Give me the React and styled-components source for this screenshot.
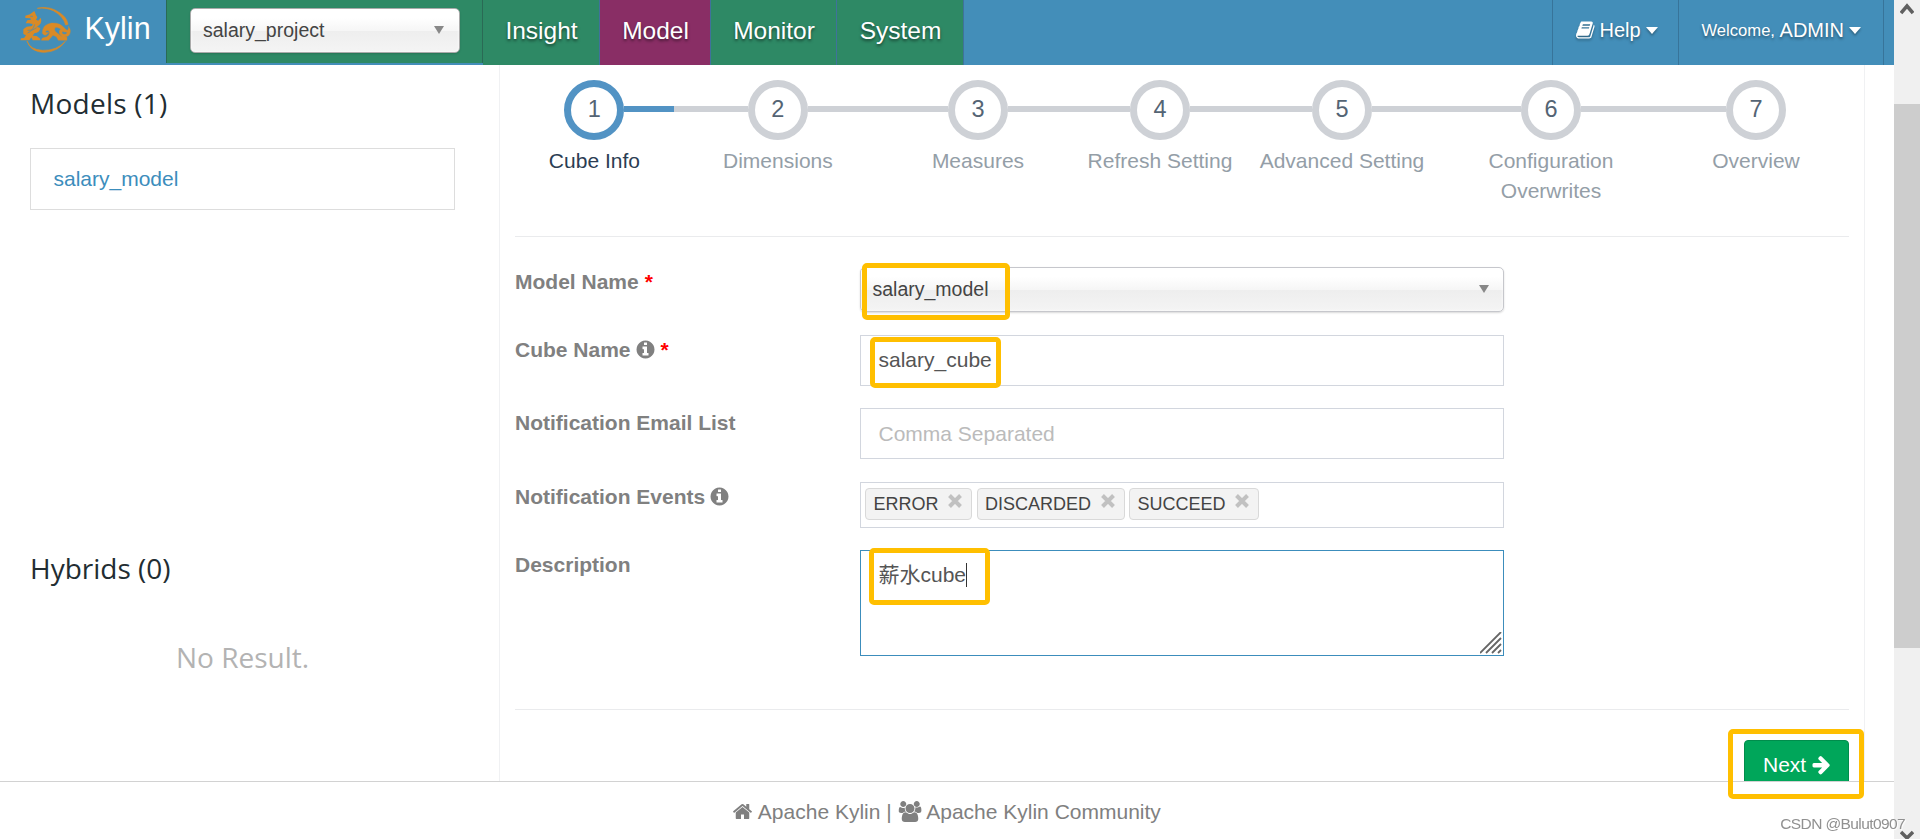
import React from 'react'
import styled, { createGlobalStyle } from 'styled-components'

const GlobalStyle = createGlobalStyle`
  * {
    box-sizing: border-box;
  }
  body {
    margin: 0;
    background: white;
    overflow: hidden;
    font-family: "Liberation Sans", Arial, "Noto Sans CJK SC", sans-serif;
    font-size: 21px;
    line-height: 30px;
    color: #333;
  }
`;

const icons = {
  book: {
    width: 1792,
    d: "M1639 478q40 57 18 129l-275 906q-19 64-76.500 107.500t-122.500 43.500h-923q-77 0-148.500-53.500t-99.500-131.500q-24-67-2-127 0-4 3-27t4-37q1-8-3-21.500t-3-19.500q2-11 8-21t16.500-23.500 16.500-23.500q23-38 45-91.500t30-91.500q3-10 .5-30t-.5-28q3-11 17-28t17-23q21-36 42-92t25-90q1-9-2.500-32t.5-28q4-13 22-30.500t22-22.500q19-26 42.500-84.500t27.500-96.500q1-8-3-25.500t-2-26.500q2-8 9-18t18-23 17-21q8-12 16.500-30.500t15-35 16-36 19.500-32 26.500-23.500 36-11.500 47.500 5.500l-1 3q38-9 51-9h761q74 0 114 56t18 130l-274 906q-36 119-71.500 153.500t-128.500 34.500h-869q-27 0-38 15-11 16-1 43 24 70 144 70h923q29 0 56-15.500t35-41.500l300-987q7-22 5-57 38 15 59 43zm-1064 2q-4 13 2 22.500t20 9.500h608q13 0 25.500-9.500t16.500-22.500l21-64q4-13-2-22.500t-20-9.500h-608q-13 0-25.500 9.500t-16.500 22.500zm-83 256q-4 13 2 22.500t20 9.500h608q13 0 25.500-9.500t16.500-22.500l21-64q4-13-2-22.500t-20-9.500h-608q-13 0-25.500 9.500t-16.500 22.500z"
  },
  home: {
    width: 1792,
    d: "M1472 992v480q0 26-19 45t-45 19h-384v-384h-256v384h-384q-26 0-45-19t-19-45v-480q0-1 .5-3t.5-3l575-474 575 474q1 2 1 6zm223-69l-62 74q-8 9-21 11h-3q-13 0-21-7l-692-577-692 577q-12 8-24 7-13-2-21-11l-62-74q-8-10-7-23.500t11-21.500l719-599q32-26 76-26t76 26l244 204v-195q0-14 9-23t23-9h192q14 0 23 9t9 23v408l219 182q10 8 11 21.500t-7 23.500z"
  },
  info: {
    width: 1792,
    d: "M1152 1376v-160q0-14-9-23t-23-9h-96v-512q0-14-9-23t-23-9h-320q-14 0-23 9t-9 23v160q0 14 9 23t23 9h96v320h-96q-14 0-23 9t-9 23v160q0 14 9 23t23 9h448q14 0 23-9t9-23zm-128-896v-160q0-14-9-23t-23-9h-192q-14 0-23 9t-9 23v160q0 14 9 23t23 9h192q14 0 23-9t9-23zm640 416q0 209-103 385.500t-279.500 279.500-385.500 103-385.500-103-279.500-279.500-103-385.500 103-385.500 279.500-279.500 385.500-103 385.500 103 279.500 279.500 103 385.500z"
  },
  arrow: {
    width: 1792,
    d: "M1600 960q0 54-37 91l-651 651q-39 37-91 37-51 0-90-37l-75-75q-38-38-38-91t38-91l293-293h-704q-52 0-84.500-37.500t-32.500-90.500v-128q0-53 32.500-90.500t84.500-37.500h704l-293-294q-38-36-38-90t38-90l75-75q38-38 90-38 53 0 91 38l651 651q37 35 37 90z"
  },
  users: {
    width: 2048,
    d: "M657 896q-162 5-265 128h-134q-82 0-138-40.500t-56-118.500q0-353 124-353 6 0 43.500 21t97.500 42.500 119 21.500q67 0 133-23-5 37-5 66 0 159 93 294zm1071 637q0 120-73 189.500t-194 69.500h-874q-121 0-194-69.500t-73-189.500q0-53 3.500-103.500t14-109 26.500-108.500 43-97.500 62-81 85.500-53.500 111.500-20q10 0 43 21.500t73 48 107 48 135 21.500 135-21.500 107-48 73-48 43-21.500q61 0 111.500 20t85.500 53.500 62 81 43 97.500 26.500 108.500 14 109 3.500 103.500zm-1024-1277q0 106-75 181t-181 75-181-75-75-181 75-181 181-75 181 75 75 181zm704 384q0 159-112.500 271.500t-271.500 112.500-271.500-112.500-112.500-271.500 112.500-271.500 271.500-112.500 271.500 112.500 112.500 271.500zm576 225q0 78-56 118.500t-138 40.500h-134q-103-123-265-128 93-135 93-294 0-29-5-66 66 23 133 23 59 0 119-21.500t97.500-42.500 43.500-21q124 0 124 353zm-128-609q0 106-75 181t-181 75-181-75-75-181 75-181 181-75 181 75 75 181z"
  }
};

const IconSvg = styled.svg`
  height: ${props => props.$size || 21}px;
  flex: none;
  fill: currentColor;
  overflow: visible;
`;

function Icon({ name, size }) {
  const icon = icons[name];
  return (
    <IconSvg $size={size} viewBox={`0 0 ${icon.width} 1792`}>
      <path d={icon.d} />
    </IconSvg>
  )
}

const Window = styled.div`
  display: flex;
  height: 839px;
  overflow: hidden;
`;

const Page = styled.div`
  display: flex;
  flex-direction: column;
  flex: 1;
  min-width: 0;
`;

const Header = styled.header`
  display: flex;
  height: 65px;
  flex: none;
  background: #438eb9;
  color: white;
`;

const Brand = styled.div`
  display: flex;
  align-items: flex-start;
  width: 166px;
  padding: 6px 0 0 20px;
  font-size: 30.5px;
  line-height: 45px;
`;

const LogoSvg = styled.svg`
  width: 52px;
  height: 47px;
  margin-right: 12.5px;
`;

const ProjectBar = styled.div`
  width: 317px;
  height: 63px;
  padding: 8px 22px 0 23px;
  background: #2e8965;
  border-left: 1px solid #2a6a55;
  border-right: 1px solid #2a6a55;
`;

const Select = styled.div`
  display: flex;
  align-items: center;
  justify-content: space-between;
  height: 45px;
  padding: 0 ${props => props.$project ? 15 : 14}px 2px ${props => props.$project ? 12 : 11.5}px;
  font-size: 19.5px;
  color: #444;
  border: 1px solid ${props => props.$project ? '#aaa' : '#c6c7cc'};
  border-radius: 5px;
  background: linear-gradient(#fff 20%, #f6f6f6 50%, #eee 52%, #f4f4f4 100%);
  box-shadow: inset 0 0 3px white, 0 1px 2px rgba(0, 0, 0, .15);
`;

const Arrow = styled.i`
  border: 5px solid transparent;
  border-top: 8px solid #888;
  border-bottom: 0;
  margin-top: 1px;
`;

const Tab = styled.div`
  width: ${props => props.$width}px;
  padding-left: 1px;
  text-align: center;
  font-size: 24.5px;
  line-height: 61px;
  text-shadow: 0 2px 3px rgba(0, 0, 0, .5);
  background: ${props => props.$active ? '#892e65' : '#2e8965'};
  border-right: 1px solid #3f729b;
`;

const HeaderRight = styled.div`
  display: flex;
  margin-left: auto;
  padding-right: 10px;
`;

const HeaderItem = styled.div`
  display: flex;
  align-items: center;
  width: ${props => props.$width}px;
  padding: 0 0 5px 22.5px;
  font-size: 20px;
  white-space: pre;
  text-shadow: 0 2px 3px rgba(0, 0, 0, .4);
  border-left: 1px solid #37749a;
  &:last-child {
    border-right: 1px solid #37749a;
  }
  svg {
    margin-right: 4px;
    filter: drop-shadow(0 2px 1px rgba(0, 0, 0, .3));
  }
  small {
    font-size: 16.6px;
    padding-top: 2px;
  }
`;

const Caret = styled.i`
  margin-left: 5px;
  border: 6px solid transparent;
  border-top: 7px solid white;
  border-bottom: 0;
  filter: drop-shadow(0 2px 1px rgba(0, 0, 0, .3));
`;

const Body = styled.div`
  display: flex;
  flex: 1;
  min-height: 0;
`;

const Sidebar = styled.aside`
  width: 499px;
  padding: 18px 44px 0 30px;
`;

const Heading = styled.h3`
  margin: 0;
  height: ${props => props.$height}px;
  font-family: "Open Sans", "Noto Sans", sans-serif;
  font-weight: 400;
  font-size: 28px;
  line-height: 40px;
  letter-spacing: ${props => props.$spacing || 0}px;
  color: #222d32;
`;

const ModelItem = styled.div`
  height: 62px;
  padding: 0 22.5px;
  line-height: 59px;
  color: #3c8dbc;
  border: 1px solid #ddd;
  margin-bottom: 338px;
`;

const NoResult = styled.div`
  margin-top: 25px;
  text-align: center;
  font-family: "Open Sans", "Noto Sans", sans-serif;
  font-size: 28px;
  line-height: 40px;
  color: #b3b3b3;
`;

const Main = styled.main`
  width: 1366px;
  padding: 15px 15px 0 15px;
  border-left: 1px solid #f0f1f3;
  border-right: 1px solid #f0f1f3;
`;

const Steps = styled.div`
  display: grid;
  grid-template-columns: 158.8px 208.2px 192px 172px 192px 226px 184px;
  height: 156px;
`;

const Step = styled.div`
  text-align: center;
  color: ${props => props.$active ? '#2b3d53' : '#949ea7'};
`;

const StepRow = styled.div`
  display: flex;
  height: 60px;
  margin-bottom: 6px;
`;

const StepLine = styled.div`
  flex: 1;
  height: 6px;
  margin-top: 26px;
  background: ${props => props.$hidden ? 'transparent' : props.$active ? '#5293c4' : '#ced1d6'};
`;

const Circle = styled.div`
  width: 60px;
  height: 60px;
  border: 7px solid ${props => props.$active ? '#5293c4' : '#ced1d6'};
  border-radius: 50%;
  font-size: 23.5px;
  line-height: 45px;
  color: #546474;
`;

const StepTitle = styled.div`
  width: 168px;
  max-width: 100%;
  margin: 0 auto;
`;

const Rule = styled.hr`
  height: 1px;
  margin: 0;
  border: 0;
  background: #eaebed;
`;

const Form = styled.div`
  display: grid;
  grid-template-columns: 345px 644px;
  grid-template-rows: 45px 51px 51px 46px 106px;
  row-gap: 22.5px;
  padding-top: 30px;
  height: 472px;
`;

const Label = styled.label`
  display: flex;
  align-items: center;
  gap: 6px;
  height: 30px;
  font-weight: bold;
  color: #808080;
  svg {
    margin: 0 1px 0 -2px;
  }
  em {
    font-style: normal;
    color: red;
  }
  svg + em {
    margin-left: -2px;
  }
`;

const Field = styled.div`
  position: relative;
`;

const TextBox = styled.div`
  height: 100%;
  padding: 0 17.5px;
  line-height: ${props => props.$area ? 30 : props.$placeholder ? 49 : 47}px;
  padding-top: ${props => props.$area ? 9 : 0}px;
  border: 1px solid ${props => props.$area ? '#3c8dbc' : '#d2d6de'};
  color: ${props => props.$placeholder ? '#bbb' : '#555'};
`;

const TextCaret = styled.span`
  display: inline-block;
  width: 1px;
  height: 24px;
  vertical-align: -5px;
  background: #333;
`;

const Grip = styled.svg`
  position: absolute;
  right: 2px;
  bottom: 2px;
  width: 22px;
  height: 22px;
  stroke: #666;
  stroke-width: 1.8;
`;

const Tags = styled.div`
  display: flex;
  gap: 4.5px;
  height: 100%;
  padding: 5px 4px;
  border: 1px solid #d2d6de;
`;

const Tag = styled.span`
  display: flex;
  justify-content: space-between;
  width: ${props => props.$width}px;
  height: 32px;
  padding: 0 9px 0 7.5px;
  font-size: 18px;
  line-height: 30px;
  color: #444;
  background: #f3f3f3;
  border: 1px solid #d9d9d9;
  border-radius: 4px;
  svg {
    width: 14px;
    height: 14px;
    margin-top: 5px;
    stroke: #c1c1c1;
    stroke-width: 4;
  }
`;

/* yellow frame drawn around the part the reader should look at */
const Highlight = styled.div`
  position: absolute;
  z-index: 2;
  left: ${props => props.$x}px;
  top: ${props => props.$y}px;
  width: ${props => props.$w}px;
  height: ${props => props.$h}px;
  border: 5px solid #ffbf00;
  border-radius: 5px;
`;

const Actions = styled.div`
  position: relative;
  display: flex;
  justify-content: flex-end;
  padding-top: 30px;
`;

const ButtonClip = styled.div`
  height: 41px;
  overflow: hidden;
`;

const NextButton = styled.button`
  display: flex;
  align-items: center;
  gap: 4.5px;
  width: 105px;
  height: 51px;
  padding: 0 0 2px 18px;
  font: inherit;
  color: white;
  background: #00a65a;
  border: 1px solid #008d4c;
  border-radius: 4px;
`;

const Footer = styled.footer`
  display: flex;
  justify-content: center;
  align-items: flex-start;
  height: 58px;
  flex: none;
  padding: 15px 1px 0 0;
  white-space: pre;
  color: #808080;
  background: white;
  border-top: 1px solid #d2d2d2;
  svg {
    margin-top: 4px;
  }
`;

const Scrollbar = styled.div`
  display: flex;
  flex-direction: column;
  align-items: center;
  width: 26px;
  background: #f0f0f0;
  svg {
    width: 14px;
    height: 12px;
    flex: none;
    fill: none;
    stroke: #606060;
    stroke-width: 3.5;
  }
`;

const ArrowUp = styled.svg`
  margin-top: 3px;
`;

const Thumb = styled.div`
  flex: none;
  width: 26px;
  height: 544px;
  margin: 89px 0 182px;
  background: #cdcdcd;
`;

const Watermark = styled.div`
  position: fixed;
  right: 15px;
  bottom: 5px;
  z-index: 3;
  font-size: 15.5px;
  line-height: 20px;
  letter-spacing: -0.6px;
  color: #909090;
  text-shadow: 1px 1px 1px white;
`;

const steps = ['Cube Info', 'Dimensions', 'Measures', 'Refresh Setting', 'Advanced Setting', 'Configuration Overwrites', 'Overview'];
const tabs = [['Insight', 117], ['Model', 111], ['Monitor', 126], ['System', 127]];
const events = [['ERROR', 107], ['DISCARDED', 148], ['SUCCEED', 130]];

function Logo() {
  return (
    <LogoSvg viewBox="60 18 156 141" fill="#d98a26">
      <path d="M112 25Q140 18 165 30Q201 48 204 73L197 75Q190 48 160 32Q140 22 112 25Z" stroke="#d98a26" strokeWidth="2" />
      <path d="M81 123Q90 149 127 151Q170 153 196 124Q175 155 134 157Q92 157 81 123Z" stroke="#d98a26" strokeWidth="2" />
      <path d="M76 47L90 43L103 33L108 45L112 52L108 59L115 62L122 53Q127 66 118 75L111 80L121 84Q119 98 103 100L98 107L110 108L121 116L120 121H98L94 112L88 121H61L63 115L72 114L78 106L70 102L70 88L80 80L96 78L98 72L87 70L77 70L82 61L93 59L91 55L76 54Z" />
      <path d="M83 91Q99 93 110 83M83 99Q100 91 104 73M91 49H99" fill="none" stroke="#438eb9" strokeWidth="2" />
      <path d="M128 90Q131 73 155 69Q180 68 191 82Q200 92 203 91Q209 86 205 79Q216 93 207 106Q199 114 187 110Q176 102 178 92Q184 83 194 89Q199 94 194 97Q188 92 186 98Q190 105 198 102L202 98L190 93Q178 82 167 82Q160 88 168 96L184 109L201 112V121H175L169 110L159 106L151 115L146 121H124L127 114L139 111Q150 104 148 95Q143 88 136 95Q139 99 146 97Q137 113 127 100Z" stroke="#d98a26" strokeWidth="1" />
    </LogoSvg>
  )
}

function App() {
  return (
    <Window>
      <GlobalStyle />
      <Page>
        <Header>
          <Brand><Logo />Kylin</Brand>
          <ProjectBar>
            <Select $project><span>salary_project</span><Arrow /></Select>
          </ProjectBar>
          {tabs.map(([name, width]) => (
            <Tab key={name} $width={width} $active={name === 'Model'}>{name}</Tab>
          ))}
          <HeaderRight>
            <HeaderItem $width={126}><Icon name="book" size={20} />Help<Caret /></HeaderItem>
            <HeaderItem $width={206}><small>Welcome, </small>ADMIN<Caret /></HeaderItem>
          </HeaderRight>
        </Header>

        <Body>
          <Sidebar>
            <Heading $height={65} $spacing={0.25}>Models (1)</Heading>
            <ModelItem>salary_model</ModelItem>
            <Heading $height={64}>Hybrids (0)</Heading>
            <NoResult>No Result.</NoResult>
          </Sidebar>

          <Main>
            <Steps>
              {steps.map((title, i) => (
                <Step key={title} $active={i === 0}>
                  <StepRow>
                    <StepLine $hidden={i === 0} />
                    <Circle $active={i === 0}>{i + 1}</Circle>
                    <StepLine $active={i === 0} $hidden={i === steps.length - 1} />
                  </StepRow>
                  <StepTitle>{title}</StepTitle>
                </Step>
              ))}
            </Steps>
            <Rule />
            <Form>
              <Label>Model Name <em>*</em></Label>
              <Field>
                <Select><span>salary_model</span><Arrow /></Select>
                <Highlight $x={2} $y={-4} $w={148} $h={57} />
              </Field>
              <Label>Cube Name <Icon name="info" /><em>*</em></Label>
              <Field>
                <TextBox>salary_cube</TextBox>
                <Highlight $x={10} $y={2} $w={131} $h={51} />
              </Field>
              <Label>Notification Email List</Label>
              <Field><TextBox $placeholder>Comma Separated</TextBox></Field>
              <Label>Notification Events <Icon name="info" /></Label>
              <Field>
                <Tags>
                  {events.map(([name, width]) => (
                    <Tag key={name} $width={width}>
                      {name}
                      <svg viewBox="0 0 14 14"><path d="M1.500 1.500L12.500 12.500M12.500 1.500L1.500 12.500" /></svg>
                    </Tag>
                  ))}
                </Tags>
              </Field>
              <Label>Description</Label>
              <Field>
                <TextBox $area>薪水cube<TextCaret /></TextBox>
                <Grip viewBox="0 0 22 22"><path d="M0 21L21 0M6 21L21 6M12 21L21 12M18 21L21 18" /></Grip>
                <Highlight $x={9} $y={-2} $w={121} $h={57} />
              </Field>
            </Form>
            <Rule />
            <Actions>
              <ButtonClip>
                <NextButton>Next <Icon name="arrow" /></NextButton>
              </ButtonClip>
              <Highlight $x={1213} $y={19} $w={136} $h={70} />
            </Actions>
          </Main>
        </Body>

        <Footer>
          <Icon name="home" /> Apache Kylin | <Icon name="users" /> Apache Kylin Community
        </Footer>
      </Page>
      <Scrollbar>
        <ArrowUp viewBox="0 0 14 12"><path d="M1 10L7 3L13 10" /></ArrowUp>
        <Thumb />
        <svg viewBox="0 0 14 12"><path d="M1 2L7 8L13 2" /></svg>
      </Scrollbar>
      <Watermark>CSDN @Bulut0907</Watermark>
    </Window>
  )
}

export default App;
